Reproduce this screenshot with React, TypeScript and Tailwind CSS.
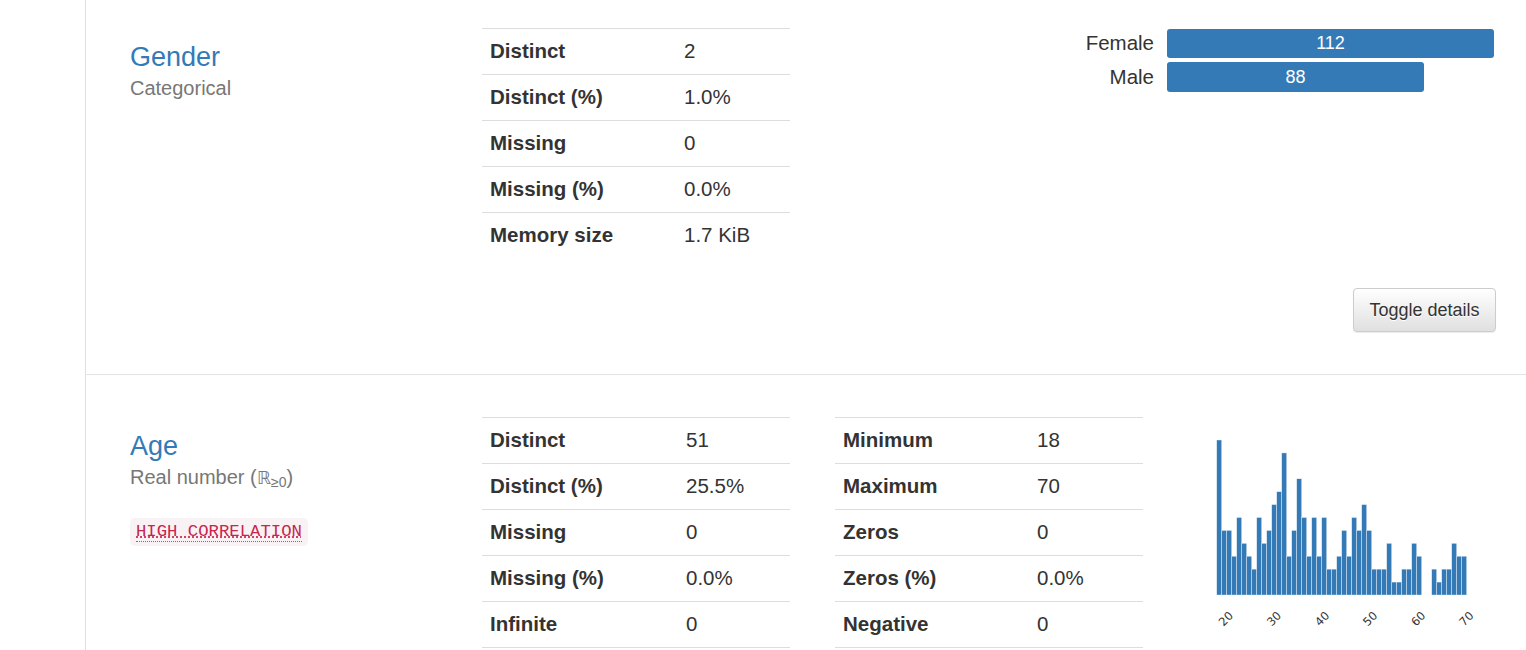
import React from 'react';

type Row = [string, string];

const genderRows: Row[] = [
  ['Distinct', '2'],
  ['Distinct (%)', '1.0%'],
  ['Missing', '0'],
  ['Missing (%)', '0.0%'],
  ['Memory size', '1.7 KiB'],
];

const ageRowsLeft: Row[] = [
  ['Distinct', '51'],
  ['Distinct (%)', '25.5%'],
  ['Missing', '0'],
  ['Missing (%)', '0.0%'],
  ['Infinite', '0'],
];

const ageRowsRight: Row[] = [
  ['Minimum', '18'],
  ['Maximum', '70'],
  ['Zeros', '0'],
  ['Zeros (%)', '0.0%'],
  ['Negative', '0'],
];

// histogram bin counts, 18..70 in 50 bins
const ageBins = [
  12, 5, 5, 3, 6, 4, 3, 2, 6, 4, 5, 7, 8, 11, 3, 5, 9, 6, 3, 6, 3, 6, 2, 2, 3,
  5, 3, 6, 5, 7, 5, 2, 2, 2, 4, 1, 1, 2, 2, 4, 3, 0, 0, 2, 1, 2, 2, 4, 3, 3,
];

const StatsTable: React.FC<{ rows: Row[]; labelClass: string; closed?: boolean }> = ({
  rows,
  labelClass,
  closed,
}) => (
  <div className={`w-[308px] shrink-0 self-start text-[20.5px] ${closed ? 'border-b border-[#ddd]' : ''}`}>
    {rows.map(([label, value]) => (
      <div key={label} className="flex h-[46px] items-center border-t border-[#ddd]">
        <div className={`${labelClass} shrink-0 px-[8px] font-bold text-[#333]`}>{label}</div>
        <div className="px-[8px] text-[#333]">{value}</div>
      </div>
    ))}
  </div>
);

const VarTitle: React.FC<{ name: string; children: React.ReactNode }> = ({ name, children }) => (
  <div>
    <div className="mt-[15px] text-[27px] leading-[29.7px] text-[#337ab7]">{name}</div>
    <div className="mt-[3px] text-[20px] leading-[24px] text-[#777]">{children}</div>
  </div>
);

const Histogram: React.FC = () => {
  const unit = 155 / 12;
  const ticks = [20, 30, 40, 50, 60, 70];
  return (
    <svg width="300" height="220" viewBox="0 0 300 220">
      {ageBins.map((c, i) =>
        c === 0 ? null : (
          <rect
            key={i}
            x={26.7 + i * 5}
            y={175 - c * unit}
            width={5}
            height={c * unit}
            fill="#337ab7"
            stroke="#ffffff"
            strokeOpacity={0.6}
            strokeWidth={0.6}
          />
        )
      )}
      {ticks.map((t) => {
        const cx = 26.7 + ((t - 18) * 250) / 52;
        return (
          <text
            key={t}
            x={cx}
            y={199}
            textAnchor="middle"
            dominantBaseline="middle"
            fontSize="11.5"
            fontFamily="'DejaVu Sans', sans-serif"
            fill="#333"
            transform={`rotate(-45 ${cx} 199)`}
          >
            {t}
          </text>
        );
      })}
    </svg>
  );
};

export default function App() {
  return (
    <div className="flex h-[650px] overflow-hidden bg-white font-['Liberation_Sans',Arial,sans-serif] text-[#333]">
      <div className="w-[86px] shrink-0 border-r border-[#e0e0e0]" />

      <div className="min-w-0 flex-1">
        {/* Gender */}
        <section className="border-b border-[#e3e3e8] pt-[28px] pb-[42px] pl-[44px] pr-[30px]">
          <div className="flex">
            <div className="w-[352px] shrink-0">
              <VarTitle name="Gender">Categorical</VarTitle>
            </div>
            <StatsTable rows={genderRows} labelClass="w-[194px]" />
            <div className="flex flex-1 justify-end pr-[2px]">
              <div className="mt-[1px] grid grid-cols-[auto_327px] gap-x-[13px] gap-y-[4px] self-start text-[20.5px]">
                <div className="flex h-[29px] items-center justify-end">Female</div>
                <div className="flex h-[29px] w-[327px] items-center justify-center rounded-[3px] bg-[#337ab7] text-[18px] text-white">
                  112
                </div>
                <div className="flex h-[30px] items-center justify-end">Male</div>
                <div className="flex h-[30px] w-[257px] items-center justify-center rounded-[3px] bg-[#337ab7] text-[18px] text-white">
                  88
                </div>
              </div>
            </div>
          </div>
          <div className="mt-[30px] flex justify-end">
            <button className="h-[44px] w-[143px] rounded-[4px] border border-[#ccc] bg-gradient-to-b from-white to-[#e0e0e0] text-[18px] text-[#333] shadow-[0_1px_1px_rgba(0,0,0,0.075)] [text-shadow:0_1px_0_#fff]">
              Toggle details
            </button>
          </div>
        </section>

        {/* Age */}
        <section className="pt-[42px] pl-[44px] pr-[30px]">
          <div className="flex">
            <div className="w-[352px] shrink-0">
              <VarTitle name="Age">
                Real number (<span className="font-['DejaVu_Sans',sans-serif] text-[18px]">ℝ</span>
                <sub className="text-[14px]">≥0</sub>)
              </VarTitle>
              <div className="mt-[28px]">
                <code className="inline-block rounded-[5px] bg-[#f9f2f4] px-[6px] py-[2px] font-['Liberation_Mono',monospace] text-[17.3px] leading-[24px] text-[#c7254e]">
                  <abbr title="This variable has a high correlation" className="border-b border-dotted border-[#777]">
                    HIGH CORRELATION
                  </abbr>
                </code>
              </div>
            </div>
            <StatsTable rows={ageRowsLeft} labelClass="w-[196px]" closed />
            <div className="w-[45px] shrink-0" />
            <StatsTable rows={ageRowsRight} labelClass="w-[194px]" closed />
            <div className="ml-[47px] mt-[3px]">
              <Histogram />
            </div>
          </div>
        </section>
      </div>
    </div>
  );
}
